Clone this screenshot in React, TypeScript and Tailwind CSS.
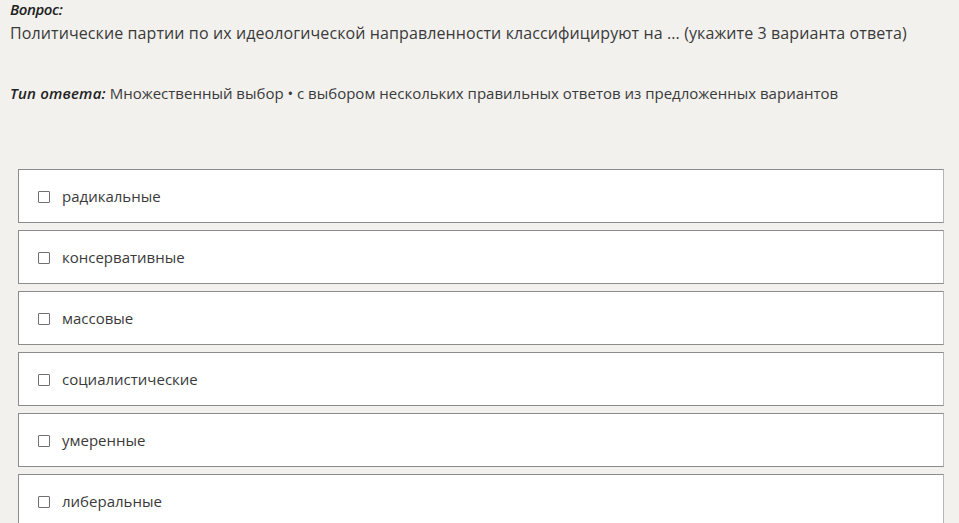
import React from 'react';

const options = [
  'радикальные',
  'консервативные',
  'массовые',
  'социалистические',
  'умеренные',
  'либеральные',
];

const App = () => {
  return (
    <div
      className="min-h-[523px] bg-[#f2f1ee] text-[#3a3a3a] overflow-hidden"
      style={{ fontFamily: '"Open Sans", "Noto Sans", sans-serif' }}
    >
      <div className="px-[10px]">
        <div className="text-[15px] leading-[19px] font-semibold italic text-[#222] tracking-[-0.4px]">Вопрос:</div>
        <div className="text-[16px] leading-[22px] mt-[3px] tracking-[0.1px] whitespace-nowrap">
          Политические партии по их идеологической направленности классифицируют на ... (укажите 3 варианта ответа)
        </div>
        <div className="text-[15px] leading-[20px] mt-[39px] whitespace-nowrap">
          <span className="font-semibold italic text-[#222] tracking-[0.2px]">Тип ответа:</span> Множественный выбор • с выбором нескольких правильных ответов из предложенных вариантов
        </div>
      </div>
      <div className="mt-[66px] ml-[18px] w-[926px] flex flex-col gap-[7px]">
        {options.map((o) => (
          <div
            key={o}
            className="h-[54px] bg-white border border-[#8c8c8c] border-r-[#b5b5b5] flex items-center pl-[19px]"
          >
            <span className="w-[12px] h-[12px] border border-[#6f6f6f] rounded-[1px] bg-white mr-[12px] mt-[1px]" />
            <span className="text-[15px] text-[#3a3a3a]">{o}</span>
          </div>
        ))}
      </div>
    </div>
  );
};

export default App;
